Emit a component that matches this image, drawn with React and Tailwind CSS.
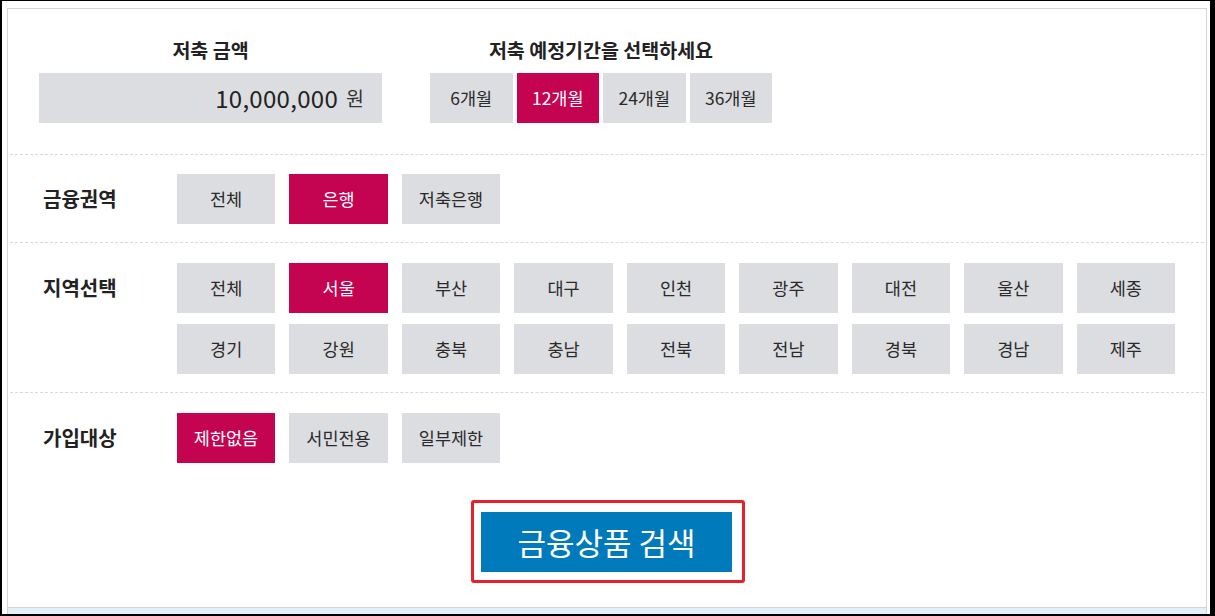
import React from "react";

const FONT = { fontFamily: '"Noto Sans CJK KR", "Noto Sans", sans-serif' };

function Btn({ label, active }) {
  return (
    <div
      className={
        "h-[50px] flex items-center justify-center text-[17.5px] leading-[22px] " +
        (active ? "bg-[#c50451] text-white" : "bg-[#dcdde1] text-[#2a2a2a]")
      }
    >
      {label}
    </div>
  );
}

function Sep() {
  return <div className="mx-[2px] border-t border-dashed border-[#d9d9d9]" />;
}

export default function App() {
  const regions1 = ["전체", "서울", "부산", "대구", "인천", "광주", "대전", "울산", "세종"];
  const regions2 = ["경기", "강원", "충북", "충남", "전북", "전남", "경북", "경남", "제주"];
  return (
    <div
      style={FONT}
      className="w-[1215px] h-[616px] bg-white border-l-2 border-t border-r-[5px] border-b-2 border-black pl-[5px] pt-[7px] pr-[3px] overflow-hidden flex flex-col"
    >
      <div className="flex-1 flex flex-col border-l border-t border-r border-[#d4d4d4]">
        {/* top section */}
        <div className="flex pl-[31px] pt-[28px] pb-[31px]">
          <div className="w-[343px] flex flex-col">
            <div className="text-center text-[19.5px] leading-[26px] font-bold text-[#222222]">저축 금액</div>
            <div className="mt-[10px] h-[50px] bg-[#dcdde1] flex items-center justify-end pr-[18px] text-[#222222]">
              <span className="text-[24px] leading-[30px] tracking-[0.3px]">10,000,000</span>
              <span className="ml-[8px] text-[19.5px] leading-[30px] text-[#333333]">원</span>
            </div>
          </div>
          <div className="ml-[48px] w-[342px] flex flex-col">
            <div className="text-center text-[19.5px] leading-[26px] font-bold text-[#222222]">
              저축 예정기간을 선택하세요
            </div>
            <div className="mt-[10px] grid grid-cols-4 gap-[4px]">
              <Btn label="6개월" />
              <Btn label="12개월" active />
              <Btn label="24개월" />
              <Btn label="36개월" />
            </div>
          </div>
        </div>
        <Sep />
        {/* 금융권역 */}
        <div className="flex items-center pl-[35px] pt-[19px] pb-[18px]">
          <div className="w-[134px] text-[20px] leading-[26px] font-bold text-[#222222]">금융권역</div>
          <div className="flex gap-[14px]">
            <div className="w-[98px]"><Btn label="전체" /></div>
            <div className="w-[99px]"><Btn label="은행" active /></div>
            <div className="w-[98px]"><Btn label="저축은행" /></div>
          </div>
        </div>
        <Sep />
        {/* 지역선택 */}
        <div className="flex items-start pl-[35px] pt-[20px] pb-[18px]">
          <div className="w-[134px] h-[50px] flex items-center text-[20px] leading-[26px] font-bold text-[#222222]">
            지역선택
          </div>
          <div className="w-[998px] grid grid-cols-9 gap-x-[14px] gap-y-[11px]">
            {regions1.map((r) => (
              <Btn key={"a" + r} label={r} active={r === "서울"} />
            ))}
            {regions2.map((r) => (
              <Btn key={"b" + r} label={r} />
            ))}
          </div>
        </div>
        <Sep />
        {/* 가입대상 */}
        <div className="flex items-center pl-[35px] pt-[20px]">
          <div className="w-[134px] text-[20px] leading-[26px] font-bold text-[#222222]">가입대상</div>
          <div className="flex gap-[14px]">
            <div className="w-[98px]"><Btn label="제한없음" active /></div>
            <div className="w-[99px]"><Btn label="서민전용" /></div>
            <div className="w-[98px]"><Btn label="일부제한" /></div>
          </div>
        </div>
        {/* search */}
        <div className="flex justify-center mt-[37px] pl-[2px]">
          <div className="border-[3px] border-[#e8202b] rounded-[3px] pl-[7px] pr-[10px] pt-[9px] pb-[8px]">
            <button className="w-[251px] h-[60px] bg-[#017abc] text-white text-[31px] leading-[36px] flex items-center justify-center">
              금융상품 검색
            </button>
          </div>
        </div>
        <div className="mt-[24px] flex-1 border-t border-[#d4d4d4] bg-[#e4f0f8]" />
      </div>
    </div>
  );
}
